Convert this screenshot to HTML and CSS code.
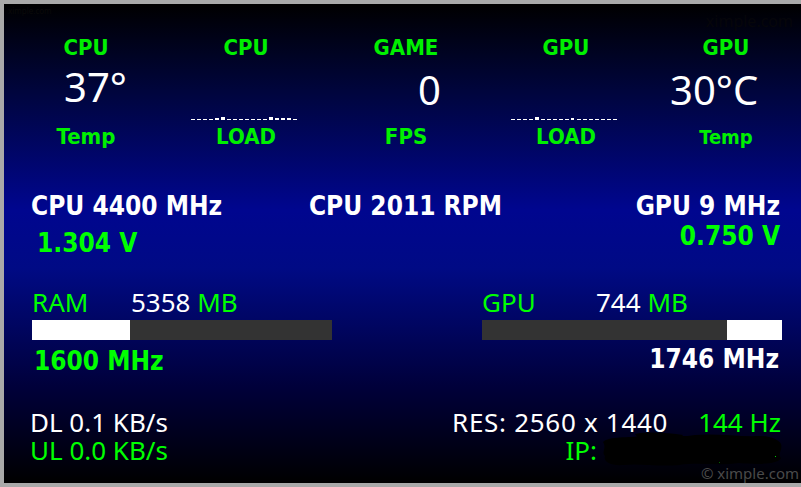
FILE: index.html
```html
<!DOCTYPE html>
<html lang="en">

<head>
    <meta charset="UTF-8">
    <title>Sensor Panel</title>
    <link rel="stylesheet" href="styles.css">
</head>

<body>
    <div class="panel">
        <div class="mark mark-top">ximple.com</div>
        <div class="mark mark-tiny">ximple.com</div>

        <div class="gauges">
            <div class="gauge">
                <div class="g-label">CPU</div>
                <div class="g-value val-cpu">37°</div>
                <div class="g-graph"></div>
                <div class="g-label">Temp</div>
            </div>
            <div class="gauge">
                <div class="g-label">CPU</div>
                <div class="g-value"></div>
                <div class="g-graph">
                    <svg width="106" height="8" viewBox="0 0 106 8" shape-rendering="crispEdges">
                        <rect x="0" y="5" width="4" height="1"/>
                        <rect x="6" y="5" width="4" height="1"/>
                        <rect x="12" y="5" width="4" height="1"/>
                        <rect x="18" y="5" width="4" height="1"/>
                        <rect x="24" y="4" width="4" height="2"/>
                        <rect x="30" y="3" width="4" height="3"/>
                        <rect x="36" y="5" width="4" height="1"/>
                        <rect x="42" y="5" width="4" height="1"/>
                        <rect x="48" y="5" width="4" height="1"/>
                        <rect x="54" y="5" width="4" height="1"/>
                        <rect x="60" y="5" width="4" height="1"/>
                        <rect x="66" y="5" width="4" height="1"/>
                        <rect x="72" y="5" width="4" height="1"/>
                        <rect x="78" y="3" width="4" height="3"/>
                        <rect x="84" y="4" width="4" height="2"/>
                        <rect x="90" y="4" width="4" height="2"/>
                        <rect x="96" y="4" width="4" height="2"/>
                        <rect x="102" y="5" width="4" height="1"/>
                    </svg>
                </div>
                <div class="g-label">LOAD</div>
            </div>
            <div class="gauge">
                <div class="g-label">GAME</div>
                <div class="g-value val-fps">0</div>
                <div class="g-graph"></div>
                <div class="g-label">FPS</div>
            </div>
            <div class="gauge">
                <div class="g-label">GPU</div>
                <div class="g-value"></div>
                <div class="g-graph">
                    <svg width="106" height="8" viewBox="0 0 106 8" shape-rendering="crispEdges">
                        <rect x="0" y="5" width="4" height="1"/>
                        <rect x="6" y="5" width="4" height="1"/>
                        <rect x="12" y="5" width="4" height="1"/>
                        <rect x="18" y="5" width="4" height="1"/>
                        <rect x="24" y="3" width="4" height="3"/>
                        <rect x="30" y="5" width="4" height="1"/>
                        <rect x="36" y="5" width="4" height="1"/>
                        <rect x="42" y="5" width="4" height="1"/>
                        <rect x="48" y="5" width="4" height="1"/>
                        <rect x="54" y="5" width="4" height="1"/>
                        <rect x="60" y="4" width="3" height="2"/>
                        <rect x="66" y="5" width="4" height="1"/>
                        <rect x="72" y="5" width="4" height="1"/>
                        <rect x="78" y="5" width="4" height="1"/>
                        <rect x="84" y="5" width="4" height="1"/>
                        <rect x="90" y="5" width="4" height="1"/>
                        <rect x="96" y="5" width="4" height="1"/>
                        <rect x="102" y="5" width="4" height="1"/>
                    </svg>
                </div>
                <div class="g-label">LOAD</div>
            </div>
            <div class="gauge">
                <div class="g-label">GPU</div>
                <div class="g-value val-gpu">30°C</div>
                <div class="g-graph"></div>
                <div class="g-label small">Temp</div>
            </div>
        </div>

        <div class="clocks">
            <div class="clock-row">
                <span class="big white">CPU 4400 MHz</span>
                <span class="big white">CPU 2011 RPM</span>
                <span class="big white end">GPU 9 MHz</span>
            </div>
            <div class="volt-row">
                <span class="big green volt-cpu">1.304 V</span>
                <span class="big green volt-gpu">0.750 V</span>
            </div>
        </div>

        <div class="memory">
            <div class="mem">
                <div class="mem-head"><span class="mem-name ram">RAM</span><span class="white">5358</span> <span class="green">MB</span></div>
                <div class="bar"><div class="fill" style="width: 98px"></div></div>
                <div class="big green mem-clock">1600 MHz</div>
            </div>
            <div class="mem">
                <div class="mem-head"><span class="mem-name vram">GPU</span><span class="white">744</span> <span class="green">MB</span></div>
                <div class="bar"><div class="used" style="width: 245px"></div><div class="fill grow"></div></div>
                <div class="big white mem-clock right">1746 MHz</div>
            </div>
        </div>

        <div class="net">
            <div class="net-left">
                <div class="white">DL 0.1 KB/s</div>
                <div class="green">UL 0.0 KB/s</div>
            </div>
            <div class="net-right">
                <div class="net-line">
                    <span class="white res">RES: 2560 x 1440</span>
                    <span class="green hz">144 Hz</span>
                </div>
                <div class="net-line">
                    <span class="green">IP:</span>
                    <span class="redact">
                        <svg width="184" height="36" viewBox="0 0 184 36">
                            <path d="M4 10 C10 4 30 6 44 4 C60 2 80 6 96 3 C116 1 140 5 160 4 C172 4 180 8 182 12
                                     C184 18 178 22 182 26 C180 32 160 33 140 31 C120 34 100 30 80 33
                                     C60 35 40 31 24 33 C12 34 4 30 6 24 C2 20 8 16 4 10 Z" fill="#000"/>
                            <path d="M36 2 C50 -1 70 1 84 3 L80 8 L40 8 Z" fill="#000"/>
                            <rect x="176" y="24" width="1" height="1" fill="#0c0"/>
                            <rect x="120" y="30" width="1" height="1" fill="#060"/>
                        </svg>
                    </span>
                </div>
            </div>
        </div>

        <div class="mark mark-bottom">© ximple.com</div>
    </div>
</body>

</html>
```

FILE: styles.css
```css
body {
    margin: 0;
    background-color: #a9a9a9;
    width: 801px;
    height: 487px;
    overflow: hidden;
}
.panel {
    position: relative;
    box-sizing: border-box;
    margin: 4px 0 0 4px;
    width: 797px;
    height: 479px;
    background: linear-gradient(#000000 0%, #00053c 18%, #00068f 43%, #000a85 55%, #00003a 80%, #000000 100%);
    font-family: "Noto Sans", sans-serif;
    font-size: 26px;
    color: white;
}
.white {
    color: #ffffff;
}
.green {
    color: #00ff00;
}
.big {
    font-family: "DejaVu Sans Condensed", "DejaVu Sans", sans-serif;
    font-stretch: condensed;
    font-weight: bold;
    font-size: 26px;
    line-height: 26px;
}

/* top gauges */
.gauges {
    display: grid;
    grid-template-columns: repeat(5, 160px);
    padding-top: 33px;
    margin-left: 2px;
}
.g-label {
    font-family: "DejaVu Sans Condensed", "DejaVu Sans", sans-serif;
    font-stretch: condensed;
    font-weight: bold;
    font-size: 22px;
    line-height: 22px;
    height: 22px;
    text-align: center;
    color: #00f000;
}
.g-label.small {
    font-size: 20px;
}
.g-graph + .g-label {
    margin-top: 4px;
}
.g-value {
    height: 55px;
    font-size: 40px;
    line-height: 62px;
    color: white;
}
.val-cpu {
    padding-left: 58px;
    line-height: 56px;
}
.val-fps {
    text-align: right;
    padding-right: 45px;
}
.val-gpu {
    padding-left: 24px;
}
.g-graph {
    height: 8px;
}
.g-graph svg {
    display: block;
    margin-left: 25px;
    fill: white;
}

/* clocks */
.clocks {
    margin-top: 45px;
    padding: 0 21px 0 27px;
}
.clock-row {
    display: grid;
    grid-template-columns: 1fr auto 1fr;
}
.clock-row .end {
    justify-self: end;
}
.volt-row {
    display: flex;
    justify-content: space-between;
    align-items: flex-start;
}
.volt-cpu {
    margin-top: 11px;
    margin-left: 6px;
}
.volt-gpu {
    margin-top: 4px;
}

/* memory bars */
.memory {
    display: flex;
    justify-content: space-between;
    margin-top: 33px;
    padding: 0 19px 0 28px;
}
.mem {
    width: 300px;
}
.mem-head {
    line-height: 26px;
    height: 26px;
    white-space: nowrap;
}
.mem-name {
    display: inline-block;
    color: #00ff00;
}
.mem-name.ram {
    width: 99px;
}
.mem-name.vram {
    width: 114px;
}
.bar {
    display: flex;
    height: 20px;
    margin-top: 5px;
    background-color: #333333;
}
.bar .fill {
    background-color: #ffffff;
}
.bar .used {
    background-color: #333333;
}
.bar .grow {
    flex: 1;
}
.mem-clock {
    margin-top: 8px;
    padding-left: 2px;
}
.mem-clock.right {
    margin-top: 6px;
    text-align: right;
    padding-right: 3px;
}

/* network */
.net {
    display: flex;
    justify-content: space-between;
    margin-top: 34px;
    padding: 0 20px 0 26px;
    line-height: 28px;
}
.net-line {
    display: flex;
    justify-content: flex-end;
}
.res {
    letter-spacing: 0.7px;
}
.hz {
    margin-left: 30px;
}
.redact {
    position: relative;
    width: 184px;
    height: 28px;
}
.redact svg {
    position: absolute;
    left: 2px;
    top: -4px;
}

/* watermarks */
.mark {
    position: absolute;
    font-family: "Noto Sans", sans-serif;
}
.mark-bottom {
    right: 2px;
    bottom: 1px;
    font-size: 15px;
    line-height: 18px;
    color: #4a4a4a;
}
.mark-top {
    right: 8px;
    top: 8px;
    font-size: 16px;
    line-height: 18px;
    color: #06060a;
}
.mark-tiny {
    left: 4px;
    top: 2px;
    font-size: 8px;
    line-height: 10px;
    color: #0a0a0a;
}
```
